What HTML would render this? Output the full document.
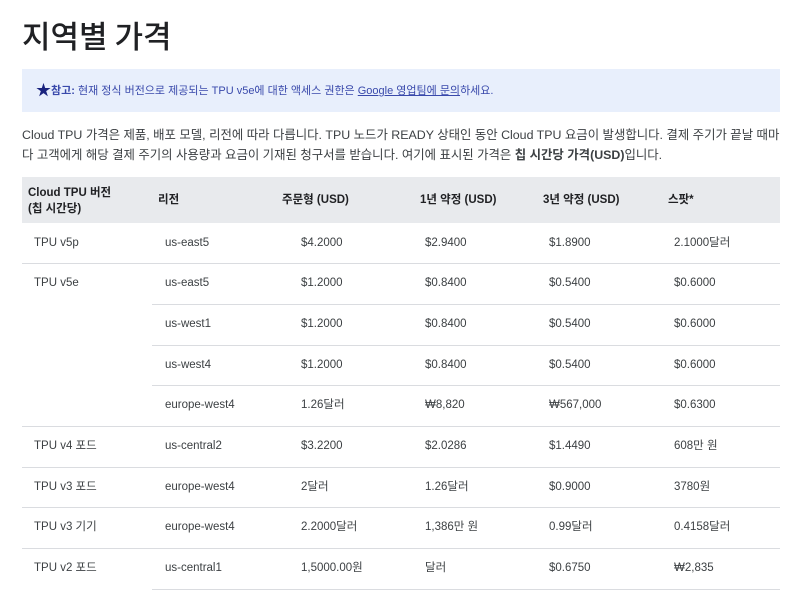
<!DOCTYPE html>
<html><head><meta charset="utf-8"><style>
*{margin:0;padding:0;box-sizing:border-box}
body{width:800px;height:599px;background:#fff;font-family:"Liberation Sans","Noto Sans CJK KR",sans-serif;color:#202124;position:relative;overflow:hidden}
.a{position:absolute;white-space:nowrap}
h1{position:absolute;left:22px;top:15px;font-size:31px;font-weight:500;color:#202124;font-family:"Noto Sans CJK KR","Liberation Sans",sans-serif;line-height:40px}
.note{position:absolute;left:22px;top:69px;width:758px;height:43px;background:#e8effc}
.note .t{position:absolute;left:14px;top:14px;font-size:11px;color:#3949ab;line-height:16px;white-space:nowrap}
.p{position:absolute;left:22px;font-size:12.4px;color:#3c4043;white-space:nowrap;line-height:16px}
.hd{position:absolute;left:22px;top:177px;width:758px;height:46px;background:#e8eaed}
.h{font-size:11.5px;font-weight:bold;color:#202124;line-height:14px}
.c{font-size:11.5px;color:#3c4043;line-height:14px;height:14px;top:0;margin-top:-7px}
.l{position:absolute;height:1px;background:#dadce0;right:20px}
</style></head><body>
<h1>지역별 가격</h1>
<div class="note"><div class="t"><span style="color:#1a237e;font-size:15px;vertical-align:-1px">★</span><b>참고:</b> 현재 정식 버전으로 제공되는 TPU v5e에 대한 액세스 권한은 <u>Google 영업팀에 문의</u>하세요.</div></div>
<div class="p" style="top:127px">Cloud TPU 가격은 제품, 배포 모델, 리전에 따라 다릅니다. TPU 노드가 READY 상태인 동안 Cloud TPU 요금이 발생합니다. 결제 주기가 끝날 때마</div>
<div class="p" style="top:147px">다 고객에게 해당 결제 주기의 사용량과 요금이 기재된 청구서를 받습니다. 여기에 표시된 가격은 <b>칩 시간당 가격(USD)</b>입니다.</div>
<div class="hd"></div>
<div class="a h" style="left:28px;top:185px;line-height:16px">Cloud TPU 버전<br>(칩 시간당)</div>
<div class="a h" style="left:158px;top:193px">리전</div>
<div class="a h" style="left:282px;top:193px">주문형 (USD)</div>
<div class="a h" style="left:420px;top:193px">1년 약정 (USD)</div>
<div class="a h" style="left:543px;top:193px">3년 약정 (USD)</div>
<div class="a h" style="left:668px;top:193px">스팟*</div>

<div class="l" style="left:22px;top:263px"></div>
<div class="l" style="left:152px;top:304px"></div>
<div class="l" style="left:152px;top:345px"></div>
<div class="l" style="left:152px;top:385px"></div>
<div class="l" style="left:22px;top:426px"></div>
<div class="l" style="left:22px;top:467px"></div>
<div class="l" style="left:22px;top:507px"></div>
<div class="l" style="left:22px;top:548px"></div>
<div class="l" style="left:152px;top:589px"></div>

<div class="a c" style="left:34px;top:243px">TPU v5p</div><div class="a c" style="left:165px;top:243px">us-east5</div><div class="a c" style="left:301px;top:243px">$4.2000</div><div class="a c" style="left:425px;top:243px">$2.9400</div><div class="a c" style="left:549px;top:243px">$1.8900</div><div class="a c" style="left:674px;top:243px">2.1000달러</div>
<div class="a c" style="left:34px;top:283px">TPU v5e</div><div class="a c" style="left:165px;top:283px">us-east5</div><div class="a c" style="left:301px;top:283px">$1.2000</div><div class="a c" style="left:425px;top:283px">$0.8400</div><div class="a c" style="left:549px;top:283px">$0.5400</div><div class="a c" style="left:674px;top:283px">$0.6000</div>
<div class="a c" style="left:165px;top:324px">us-west1</div><div class="a c" style="left:301px;top:324px">$1.2000</div><div class="a c" style="left:425px;top:324px">$0.8400</div><div class="a c" style="left:549px;top:324px">$0.5400</div><div class="a c" style="left:674px;top:324px">$0.6000</div>
<div class="a c" style="left:165px;top:365px">us-west4</div><div class="a c" style="left:301px;top:365px">$1.2000</div><div class="a c" style="left:425px;top:365px">$0.8400</div><div class="a c" style="left:549px;top:365px">$0.5400</div><div class="a c" style="left:674px;top:365px">$0.6000</div>
<div class="a c" style="left:165px;top:405px">europe-west4</div><div class="a c" style="left:301px;top:405px">1.26달러</div><div class="a c" style="left:425px;top:405px">₩8,820</div><div class="a c" style="left:549px;top:405px">₩567,000</div><div class="a c" style="left:674px;top:405px">$0.6300</div>
<div class="a c" style="left:34px;top:446px">TPU v4 포드</div><div class="a c" style="left:165px;top:446px">us-central2</div><div class="a c" style="left:301px;top:446px">$3.2200</div><div class="a c" style="left:425px;top:446px">$2.0286</div><div class="a c" style="left:549px;top:446px">$1.4490</div><div class="a c" style="left:674px;top:446px">608만 원</div>
<div class="a c" style="left:34px;top:487px">TPU v3 포드</div><div class="a c" style="left:165px;top:487px">europe-west4</div><div class="a c" style="left:301px;top:487px">2달러</div><div class="a c" style="left:425px;top:487px">1.26달러</div><div class="a c" style="left:549px;top:487px">$0.9000</div><div class="a c" style="left:674px;top:487px">3780원</div>
<div class="a c" style="left:34px;top:527px">TPU v3 기기</div><div class="a c" style="left:165px;top:527px">europe-west4</div><div class="a c" style="left:301px;top:527px">2.2000달러</div><div class="a c" style="left:425px;top:527px">1,386만 원</div><div class="a c" style="left:549px;top:527px">0.99달러</div><div class="a c" style="left:674px;top:527px">0.4158달러</div>
<div class="a c" style="left:34px;top:568px">TPU v2 포드</div><div class="a c" style="left:165px;top:568px">us-central1</div><div class="a c" style="left:301px;top:568px">1,5000.00원</div><div class="a c" style="left:425px;top:568px">달러</div><div class="a c" style="left:549px;top:568px">$0.6750</div><div class="a c" style="left:674px;top:568px">₩2,835</div>
</body></html>
